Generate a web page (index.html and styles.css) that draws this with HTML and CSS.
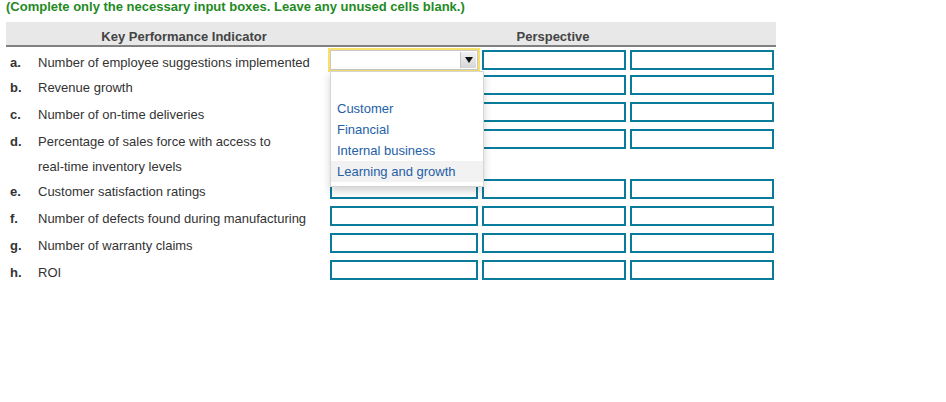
FILE: index.html
```html
<!DOCTYPE html>
<html lang="en">
<head>
    <meta charset="UTF-8">
    <title>Key Performance Indicators</title>
    <link rel="stylesheet" href="styles.css">
</head>
<body>

    <p class="note">(Complete only the necessary input boxes. Leave any unused cells blank.)</p>

    <div class="kpi-table">
        <div class="head"></div>
        <div class="head">Key Performance Indicator</div>
        <div class="head perspective">Perspective</div>

        <!-- row a -->
        <div class="letter">a.</div>
        <div class="label">Number of employee suggestions implemented</div>
        <div class="cell">
            <div class="select-box">
                <span class="arrow">
                    <svg width="8" height="6" viewBox="0 0 8 6"><path d="M0 0 H8 L4 6 Z" fill="#111"/></svg>
                </span>
                <ul class="dropdown">
                    <li>&nbsp;</li>
                    <li>Customer</li>
                    <li>Financial</li>
                    <li>Internal business</li>
                    <li class="hover">Learning and growth</li>
                </ul>
            </div>
        </div>
        <div class="cell"><input type="text" class="box"></div>
        <div class="cell"><input type="text" class="box"></div>

        <!-- row b -->
        <div class="letter">b.</div>
        <div class="label">Revenue growth</div>
        <div class="cell"><input type="text" class="box wide"></div>
        <div class="cell"><input type="text" class="box"></div>
        <div class="cell"><input type="text" class="box"></div>

        <!-- row c -->
        <div class="letter">c.</div>
        <div class="label">Number of on-time deliveries</div>
        <div class="cell"><input type="text" class="box wide"></div>
        <div class="cell"><input type="text" class="box"></div>
        <div class="cell"><input type="text" class="box"></div>

        <!-- row d -->
        <div class="letter">d.</div>
        <div class="label">Percentage of sales force with access to<br>real-time inventory levels</div>
        <div class="cell"><input type="text" class="box wide"></div>
        <div class="cell"><input type="text" class="box"></div>
        <div class="cell"><input type="text" class="box"></div>

        <!-- row e -->
        <div class="letter">e.</div>
        <div class="label">Customer satisfaction ratings</div>
        <div class="cell"><input type="text" class="box wide"></div>
        <div class="cell"><input type="text" class="box"></div>
        <div class="cell"><input type="text" class="box"></div>

        <!-- row f -->
        <div class="letter">f.</div>
        <div class="label">Number of defects found during manufacturing</div>
        <div class="cell"><input type="text" class="box wide"></div>
        <div class="cell"><input type="text" class="box"></div>
        <div class="cell"><input type="text" class="box"></div>

        <!-- row g -->
        <div class="letter">g.</div>
        <div class="label">Number of warranty claims</div>
        <div class="cell"><input type="text" class="box wide"></div>
        <div class="cell"><input type="text" class="box"></div>
        <div class="cell"><input type="text" class="box"></div>

        <!-- row h -->
        <div class="letter">h.</div>
        <div class="label">ROI</div>
        <div class="cell"><input type="text" class="box wide"></div>
        <div class="cell"><input type="text" class="box"></div>
        <div class="cell"><input type="text" class="box"></div>
    </div>

</body>
</html>
```

FILE: styles.css
```css
body {
    font-family: "Liberation Sans", Arial, sans-serif;
    font-size: 13px;
    margin: 0;
    padding: 0 6px;
    background-color: #fff;
    color: #333;
}
.note {
    margin: 0;
    line-height: 14px;
    font-weight: bold;
    color: #1f8a1f;
}
.kpi-table {
    display: grid;
    grid-template-columns: 32px 292px 152px 148px 146px;
    grid-template-rows: 25px 25px 27px 27px 50px 27px 27px 27px 27px;
    width: 770px;
    margin-top: 8px;
}
.head {
    background-color: #e8e8e8;
    border-bottom: 2px solid #808080;
    padding-top: 7px;
    line-height: 16px;
    font-weight: bold;
    color: #444;
    text-align: center;
}
.head.perspective {
    grid-column: 3 / 6;
}
.letter {
    padding: 3px 0 0 4px;
    line-height: 25px;
    font-weight: bold;
}
.label {
    padding-top: 3px;
    line-height: 25px;
}
.cell {
    padding-top: 3px;
}
.box {
    display: block;
    box-sizing: border-box;
    width: 144px;
    height: 20px;
    margin: 0;
    border: 2px solid #0a7b9b;
    background: #fff;
}
.box.wide {
    width: 148px;
}
.select-box {
    position: relative;
    box-sizing: border-box;
    width: 148px;
    height: 20px;
    border: 1px solid #c8c8c8;
    background: #fff;
    outline: 2px solid #f7e16a;
}
.arrow {
    position: absolute;
    right: 1px;
    top: 1px;
    width: 15px;
    height: 16px;
    display: flex;
    align-items: center;
    justify-content: center;
    background: linear-gradient(#f2f2f2, #d6d6d6);
    border-left: 1px solid #c4c4c4;
}
.dropdown {
    position: absolute;
    top: 20px;
    left: -1px;
    width: 152px;
    margin: 0;
    padding: 5px 0 4px;
    list-style: none;
    background: #fff;
    border: 1px solid #d6d6d6;
    box-shadow: 0 4px 8px rgba(0,0,0,0.18);
    z-index: 5;
}
.dropdown li {
    height: 21px;
    line-height: 21px;
    padding-left: 6px;
    color: #2460a7;
}
.dropdown li.hover {
    background-color: #f2f2f2;
}
```
